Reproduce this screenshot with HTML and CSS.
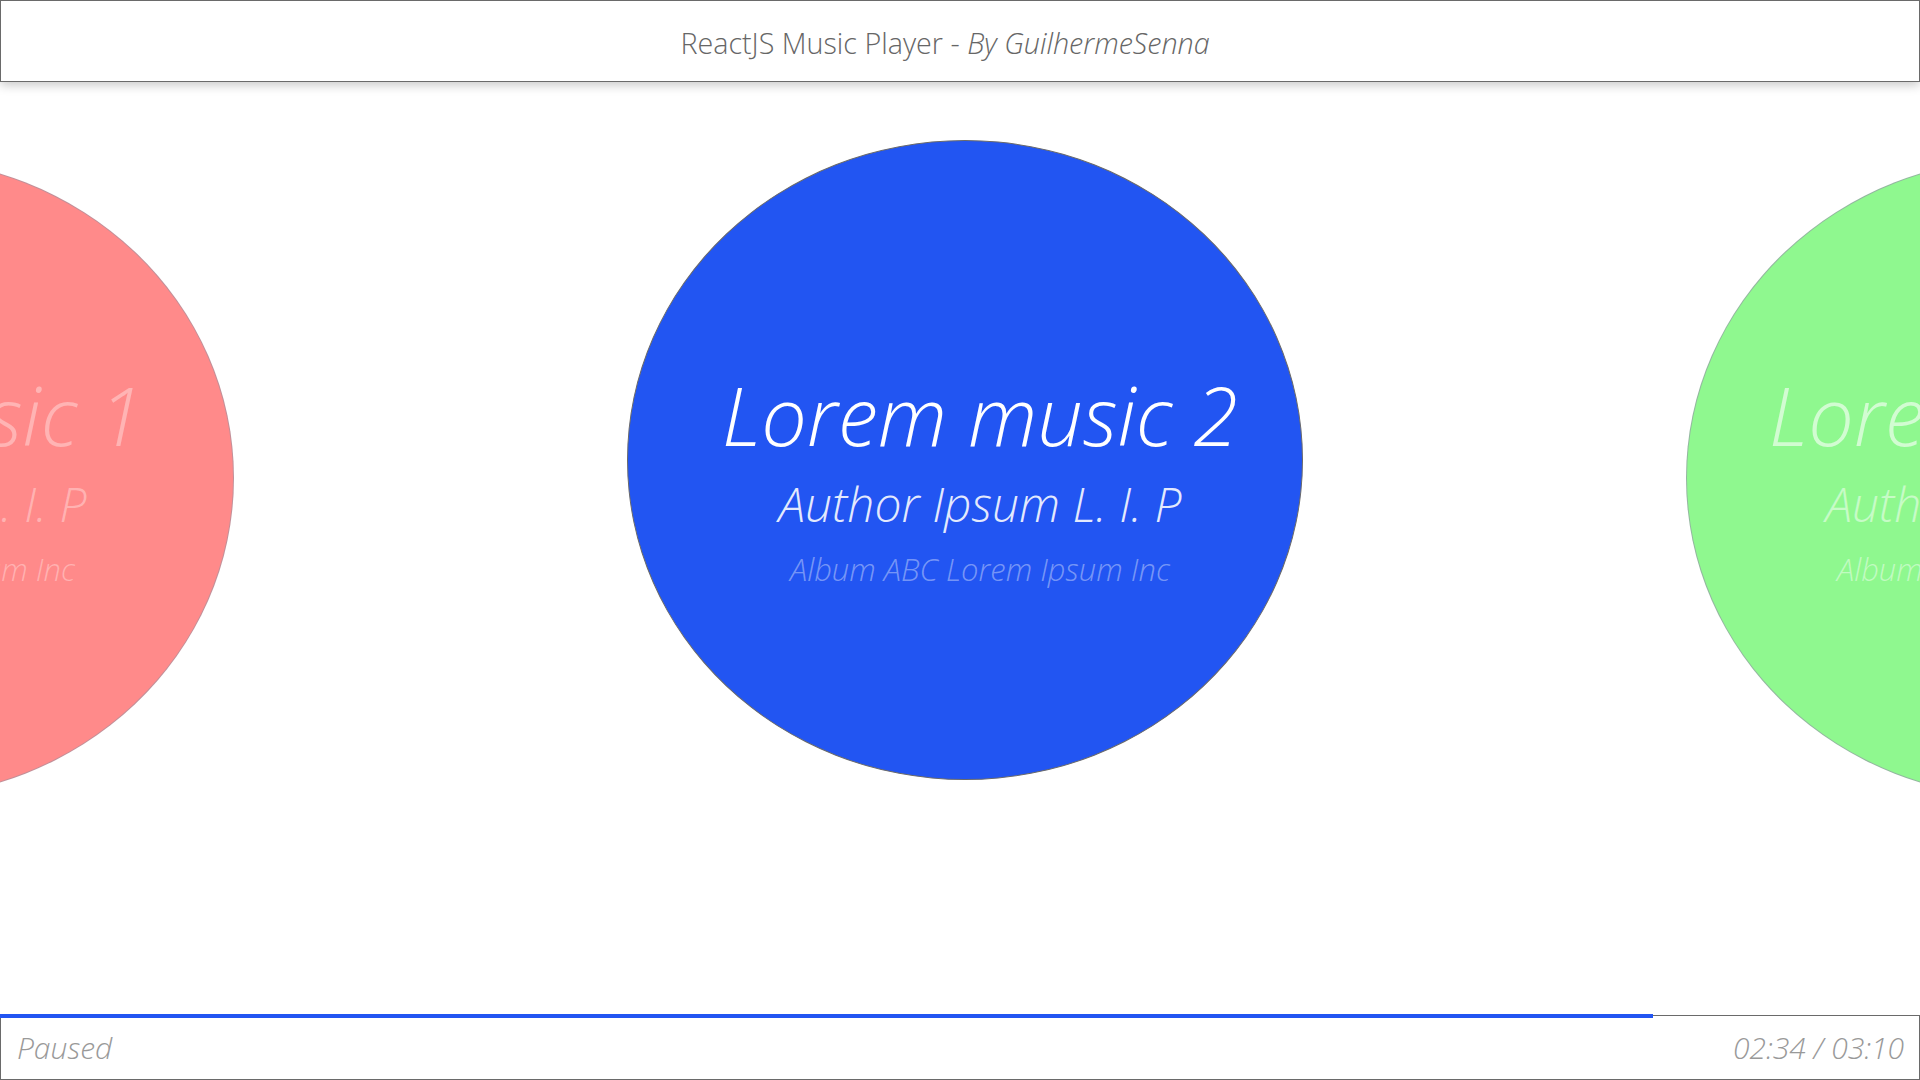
FILE: index.html
```html
<!DOCTYPE html>
<html lang="en">
<head>
<meta charset="utf-8">
<title>ReactJS Music Player</title>
<link rel="stylesheet" href="styles.css">
</head>
<body>
<div class="app">
  <header class="topbar">
    <h1 class="brand">ReactJS Music Player - <em>By GuilhermeSenna</em></h1>
  </header>
  <main class="stage">
    <div class="track">
      <section class="slide slide--red">
        <div class="disc">
          <h2 class="song">Lorem music 1</h2>
          <p class="author">Author Ipsum L. I. P</p>
          <p class="album">Album ABC Lorem Ipsum Inc</p>
        </div>
      </section>
      <section class="slide slide--blue slide--active">
        <div class="disc">
          <h2 class="song">Lorem music 2</h2>
          <p class="author">Author Ipsum L. I. P</p>
          <p class="album">Album ABC Lorem Ipsum Inc</p>
        </div>
      </section>
      <section class="slide slide--green">
        <div class="disc">
          <h2 class="song">Lorem music 3</h2>
          <p class="author">Author Ipsum L. I. P</p>
          <p class="album">Album ABC Lorem Ipsum Inc</p>
        </div>
      </section>
    </div>
  </main>
  <footer class="player">
    <div class="progress" style="width: 1653px;"></div>
    <span class="status">Paused</span>
    <span class="time">02:34 / 03:10</span>
  </footer>
</div>
</body>
</html>
```

FILE: styles.css
```css
* { box-sizing: border-box; }

html, body {
  margin: 0;
  padding: 0;
  width: 100%;
  height: 100%;
  background: #ffffff;
  overflow: hidden;
}

body {
  font-family: "Open Sans", "Noto Sans", Lato, sans-serif;
  font-weight: 300;
  color: #666;
}

.app {
  display: flex;
  flex-direction: column;
  height: 100vh;
}

.topbar {
  position: relative;
  z-index: 2;
  flex: 0 0 82px;
  height: 82px;
  border: 1px solid #6a6a6a;
  background: #fff;
  box-shadow: 0 3px 10px rgba(0, 0, 0, 0.22);
  display: flex;
  align-items: center;
  justify-content: center;
  padding: 2px 30px 0 0;
}

.brand {
  margin: 0;
  font-size: 28.7px;
  font-weight: 300;
  color: #666;
  letter-spacing: 0;
  white-space: nowrap;
}

.brand em {
  font-style: italic;
}

.stage {
  flex: 1 1 auto;
  overflow: hidden;
  display: flex;
  justify-content: center;
  align-items: flex-start;
}

.track {
  display: flex;
  justify-content: center;
  gap: 388px;
  width: 100%;
}

.slide {
  flex: 0 0 676px;
  width: 676px;
  height: 640px;
  margin-top: 76px;
}

.slide--active {
  margin-top: 58px;
  margin-left: 5px;
  margin-right: -5px;
}

.disc {
  width: 100%;
  height: 100%;
  border-radius: 50%;
  display: flex;
  flex-direction: column;
  align-items: center;
  justify-content: center;
  font-style: italic;
  text-align: center;
  white-space: nowrap;
  padding-top: 1px;
}

.slide--active .disc {
  padding-top: 37px;
}

.slide--red .disc {
  background: #ff8a8a;
  border: 1px solid rgba(120, 150, 170, 0.45);
  padding-right: 22px;
}

.slide--blue .disc {
  background: #2255f2;
  border: 1px solid #6a6a6a;
  padding-left: 30px;
}

.slide--green .disc {
  background: #8ff88f;
  border: 1px solid rgba(150, 140, 170, 0.6);
  padding-left: 6px;
}

.song {
  margin: 0 0 12px;
  font-size: 81px;
  line-height: 96px;
  font-weight: 300;
}

.author {
  margin: 0 0 15px;
  font-size: 48px;
  line-height: 58px;
  font-weight: 300;
}

.album {
  margin: 0;
  font-size: 31px;
  line-height: 42px;
  font-weight: 300;
}

.slide--blue .song { color: #ffffff; }
.slide--blue .author { color: rgba(255, 255, 255, 0.88); }
.slide--blue .album { color: rgba(255, 255, 255, 0.4); }

.slide--red .song { color: rgba(255, 255, 255, 0.36); }
.slide--red .author { color: rgba(255, 255, 255, 0.36); }
.slide--red .album { color: rgba(255, 255, 255, 0.34); }

.slide--green .song { color: rgba(255, 255, 255, 0.6); }
.slide--green .author { color: rgba(255, 255, 255, 0.5); }
.slide--green .album { color: rgba(255, 255, 255, 0.45); }

.player {
  position: relative;
  flex: 0 0 65px;
  height: 65px;
  border: 1px solid #6a6a6a;
  display: flex;
  align-items: center;
  justify-content: space-between;
  padding: 0 15px 0 16px;
  font-style: italic;
  font-size: 30px;
  color: #999;
}

.progress {
  position: absolute;
  top: -2px;
  left: -1px;
  height: 4px;
  background: #2255f2;
}

.status, .time {
  font-weight: 300;
  white-space: nowrap;
}
```
